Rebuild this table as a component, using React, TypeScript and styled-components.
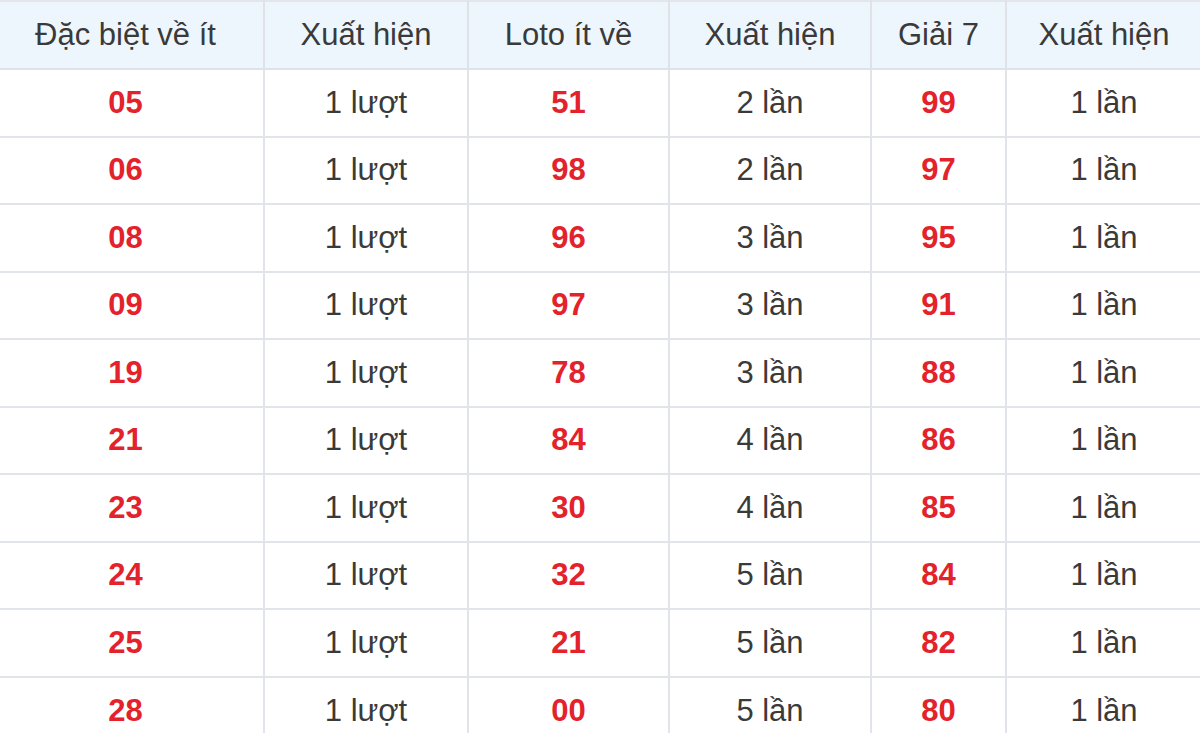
import React from 'react';
import styled, { createGlobalStyle } from 'styled-components';

const GlobalStyle = createGlobalStyle`
  html, body {
    margin: 0;
    padding: 0;
    background: #fff;
    font-family: "Liberation Sans", Arial, sans-serif;
  }
`;

type Row = {
  special: string;
  specialCount: string;
  loto: string;
  lotoCount: string;
  prize: string;
  prizeCount: string;
};

const rows: Row[] = [
  { special: '05', specialCount: '1 lượt', loto: '51', lotoCount: '2 lần', prize: '99', prizeCount: '1 lần' },
  { special: '06', specialCount: '1 lượt', loto: '98', lotoCount: '2 lần', prize: '97', prizeCount: '1 lần' },
  { special: '08', specialCount: '1 lượt', loto: '96', lotoCount: '3 lần', prize: '95', prizeCount: '1 lần' },
  { special: '09', specialCount: '1 lượt', loto: '97', lotoCount: '3 lần', prize: '91', prizeCount: '1 lần' },
  { special: '19', specialCount: '1 lượt', loto: '78', lotoCount: '3 lần', prize: '88', prizeCount: '1 lần' },
  { special: '21', specialCount: '1 lượt', loto: '84', lotoCount: '4 lần', prize: '86', prizeCount: '1 lần' },
  { special: '23', specialCount: '1 lượt', loto: '30', lotoCount: '4 lần', prize: '85', prizeCount: '1 lần' },
  { special: '24', specialCount: '1 lượt', loto: '32', lotoCount: '5 lần', prize: '84', prizeCount: '1 lần' },
  { special: '25', specialCount: '1 lượt', loto: '21', lotoCount: '5 lần', prize: '82', prizeCount: '1 lần' },
  { special: '28', specialCount: '1 lượt', loto: '00', lotoCount: '5 lần', prize: '80', prizeCount: '1 lần' },
];

const headers = ['Đặc biệt về ít', 'Xuất hiện', 'Loto ít về', 'Xuất hiện', 'Giải 7', 'Xuất hiện'];
// first column is partly cut off on the left in the screenshot
const widths = [277, 204, 201, 202, 135, 195];

export default function App() {
  return (
    <>
      <GlobalStyle />
      <Wrapper>
        <Table>
          <colgroup>
            {widths.map((w, i) => (
              <col key={i} style={{ width: w }} />
            ))}
          </colgroup>
          <thead>
            <tr>
              {headers.map((h, i) => (
                <HeadCell key={i}>{h}</HeadCell>
              ))}
            </tr>
          </thead>
          <tbody>
            {rows.map((r) => (
              <BodyRow key={r.special}>
                <Cell $hot>{r.special}</Cell>
                <Cell>{r.specialCount}</Cell>
                <Cell $hot>{r.loto}</Cell>
                <Cell>{r.lotoCount}</Cell>
                <Cell $hot>{r.prize}</Cell>
                <Cell>{r.prizeCount}</Cell>
              </BodyRow>
            ))}
          </tbody>
        </Table>
      </Wrapper>
    </>
  );
}

const Wrapper = styled.div`
  width: 1200px;
  height: 733px;
  overflow: hidden;
`;

const Table = styled.table`
  width: 1214px;
  margin-left: -14px;
  border-collapse: collapse;
  table-layout: fixed;
  border-top: 2px solid #e3e6ea;
`;

const HeadCell = styled.th`
  height: 66px;
  padding: 0;
  background: #eef6fd;
  color: #3a3a3a;
  font-size: 31px;
  font-weight: normal;
  text-align: center;
  vertical-align: middle;
  border: 2px solid #dfe3e8;
  border-top: none;

  &:last-child {
    border-right: none;
  }
`;

const BodyRow = styled.tr`
  height: 67.5px;

  &:last-child td {
    border-bottom: none;
  }
`;

const Cell = styled.td<{ $hot?: boolean }>`
  padding: 0;
  text-align: center;
  vertical-align: middle;
  font-size: ${(p) => (p.$hot ? '31px' : '31px')};
  font-weight: ${(p) => (p.$hot ? 'bold' : 'normal')};
  color: ${(p) => (p.$hot ? '#e3222c' : '#3a3a3a')};
  border: 2px solid #e1e4e8;

  &:last-child {
    border-right: none;
  }
`;
